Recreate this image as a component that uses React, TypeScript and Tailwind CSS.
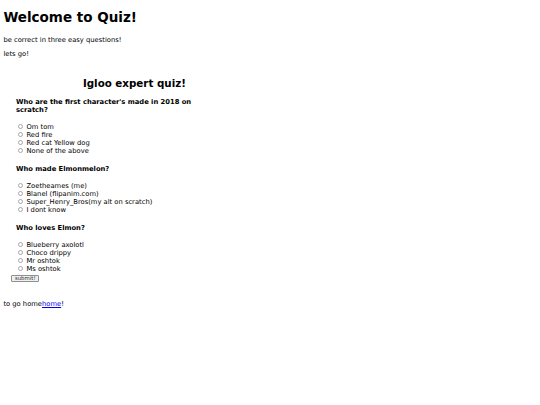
const QUESTIONS = [
  {
    q: "Who are the first character's made in 2018 on scratch?",
    name: "q1",
    options: ["Om tom", "Red fire", "Red cat Yellow dog", "None of the above"],
  },
  {
    q: "Who made Elmonmelon?",
    name: "q2",
    options: ["Zoetheames (me)", "Blanel (flipanim.com)", "Super_Henry_Bros(my alt on scratch)", "I dont know"],
  },
  {
    q: "Who loves Elmon?",
    name: "q3",
    options: ["Blueberry axolotl", "Choco drippy", "Mr oshtok", "Ms oshtok"],
  },
];

export default function App() {
  return (
    <div className="min-h-screen bg-white px-[3.4px] pt-[9px] text-[6.75px] leading-[normal] text-black font-['DejaVu_Sans',Verdana,sans-serif]">
      <h1 className="mb-[10.5px] text-[13.5px] font-bold">Welcome to Quiz!</h1>
      <p className="my-[6.75px]">be correct in three easy questions!</p>
      <p className="my-[6.75px]">lets go!</p>

      <form className="mt-[18.6px]">
        <h2 className="w-[262px] text-center text-[10.3px] font-bold">Igloo expert quiz!</h2>

        <div className="ml-[8px] w-[200px]">
          {QUESTIONS.map((item) => (
            <div key={item.name} className="pl-[4.6px] pb-[1px]">
              <h4 className="my-[9px] text-[6.75px] font-bold">{item.q}</h4>
              <div>
                {item.options.map((opt) => (
                  <div key={opt} className="flex h-[8px] items-center">
                    <input
                      type="radio"
                      name={item.name}
                      className="ml-[2.1px] mr-[1.3px] h-[5px] w-[5px] appearance-none rounded-full border-[0.5px] border-[#a8a8a8] bg-white"
                    />
                    <span className="pl-[2.1px]">{opt}</span>
                  </div>
                ))}
              </div>
            </div>
          ))}
          <button
            type="button"
            className="mt-[1.5px] h-[6.6px] rounded-[1px] border-[0.5px] border-[#8f8f8f] bg-[#efefef] px-[2.5px] text-[5.4px] leading-none text-[#333]"
          >
            submit!
          </button>
        </div>
      </form>

      <p className="mt-[18px]">
        to go home
        <a href="#" className="text-[#0000ee] underline">
          home
        </a>
        !
      </p>
    </div>
  );
}
